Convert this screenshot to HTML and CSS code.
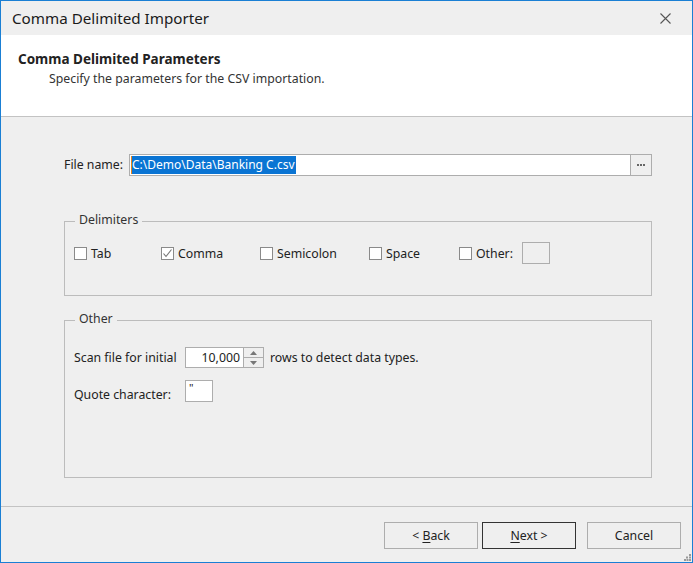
FILE: index.html
```html
<!DOCTYPE html>
<html>
<head>
<meta charset="utf-8">
<link rel="stylesheet" href="styles.css">
</head>
<body>
<div class="window">
  <div class="titlebar">
    <span class="title">Comma Delimited Importer</span>
    <svg class="close" width="11" height="11" viewBox="0 0 11 11"><path d="M0.5 0.5 L10.5 10.5 M10.5 0.5 L0.5 10.5" stroke="#555" stroke-width="1.1" fill="none"/></svg>
  </div>
  <div class="header">
    <div class="h-title">Comma Delimited Parameters</div>
    <div class="h-sub">Specify the parameters for the CSV importation.</div>
  </div>
  <div class="main">
    <div class="file-row">
      <span class="file-label">File name:</span>
      <div class="file-input"><span class="caret"></span><span class="sel">C:\Demo\Data\Banking C.csv</span></div>
      <div class="browse"><span class="dot"></span><span class="dot"></span><span class="dot"></span></div>
    </div>
    <div class="group delim">
      <span class="legend">Delimiters</span>
      <div class="check-row">
        <div class="check w-tab"><span class="box"></span><span>Tab</span></div>
        <div class="check w-comma"><span class="box"><svg width="11" height="11" viewBox="0 0 11 11"><path d="M1.5 5.5 L4 8.5 L9.5 1.5" stroke="#777" stroke-width="1.1" fill="none"/></svg></span><span>Comma</span></div>
        <div class="check w-semi"><span class="box"></span><span>Semicolon</span></div>
        <div class="check w-space"><span class="box"></span><span>Space</span></div>
        <div class="check w-other"><span class="box"></span><span>Other:</span></div>
        <div class="other-field"></div>
      </div>
    </div>
    <div class="group other">
      <span class="legend">Other</span>
      <div class="scan-row">
        <span class="lbl-scan">Scan file for initial</span>
        <div class="spin">
          <span class="spin-val">10,000</span>
          <div class="spin-btns">
            <div class="spin-btn"><svg width="7" height="4" viewBox="0 0 7 4"><path d="M0 4 L3.5 0 L7 4 Z" fill="#777"/></svg></div>
            <div class="spin-btn"><svg width="7" height="4" viewBox="0 0 7 4"><path d="M0 0 L3.5 4 L7 0 Z" fill="#777"/></svg></div>
          </div>
        </div>
        <span class="lbl-rows">rows to detect data types.</span>
      </div>
      <div class="quote-row">
        <span class="lbl-quote">Quote character:</span>
        <div class="quote-field">"</div>
      </div>
    </div>
  </div>
  <div class="footer">
    <button class="btn"><span>&lt; <u>B</u>ack</span></button>
    <button class="btn btn-default"><span><u>N</u>ext &gt;</span></button>
    <button class="btn btn-cancel"><span>Cancel</span></button>
    <svg class="grip" width="7" height="7" viewBox="0 0 7 7">
      <rect x="5" y="0" width="2" height="2" fill="#999"/>
      <rect x="2" y="2.5" width="2" height="2" fill="#999"/>
      <rect x="5" y="2.5" width="2" height="2" fill="#999"/>
      <rect x="0" y="5" width="2" height="2" fill="#999"/>
      <rect x="2.5" y="5" width="2" height="2" fill="#999"/>
      <rect x="5" y="5" width="2" height="2" fill="#999"/>
    </svg>
  </div>
</div>
</body>
</html>
```

FILE: styles.css
```css
* { box-sizing: border-box; }
html, body { margin: 0; padding: 0; }
body {
  font-family: "Segoe UI", "Noto Sans", "Open Sans", sans-serif;
  font-size: 12.3px;
  color: #222;
  background: #efefef;
}
.window {
  width: 693px;
  height: 563px;
  border: 1px solid #1a7fd4;
  background: #efefef;
  display: flex;
  flex-direction: column;
}
.titlebar {
  height: 34px;
  display: flex;
  align-items: center;
  justify-content: space-between;
  padding: 0 21px 0 11px;
  background: #efefef;
}
.title {
  font-size: 15.2px;
  color: #1b1b1b;
}
.close { display: block; margin-top: 1px; }
.header {
  height: 82px;
  background: #fff;
  border-bottom: 1px solid #c3c3c3;
  padding: 16px 0 0 17px;
}
.h-title {
  font-size: 13.5px;
  font-weight: bold;
  line-height: 17px;
  color: #222;
}
.h-sub {
  margin-top: 3px;
  padding-left: 31px;
  line-height: 16px;
  font-size: 12.3px;
  color: #333;
}
.main {
  height: 390px;
  border-bottom: 1px solid #c3c3c3;
  padding: 37px 40px 0 63px;
}
.file-row {
  display: flex;
  height: 22px;
  align-items: stretch;
}
.file-label {
  width: 65px;
  line-height: 22px;
}
.file-input {
  width: 502px;
  background: #fff;
  border: 1px solid #adadad;
  display: flex;
  align-items: center;
  padding-left: 1px;
}
.caret {
  width: 1px;
  height: 18px;
  background: #e8841a;
}
.sel {
  background: #0a74d3;
  color: #fff;
  height: 18px;
  line-height: 18px;
  font-size: 12px;
  padding-right: 1px;
}
.browse {
  width: 21px;
  border: 1px solid #adadad;
  border-left: none;
  background: #efefef;
  display: flex;
  align-items: center;
  justify-content: center;
  gap: 1px;
}
.dot {
  width: 2px;
  height: 2px;
  background: #666;
}
.group {
  position: relative;
  width: 588px;
  border: 1px solid #bcbcbc;
}
.legend {
  position: absolute;
  left: 10px;
  top: -10px;
  padding: 0 4px 0 4px;
  background: #efefef;
  line-height: 16px;
  color: #333;
}
.delim {
  margin-top: 45px;
  height: 75px;
  padding: 20px 0 0 9px;
}
.check-row {
  display: flex;
  align-items: center;
  height: 22px;
}
.check {
  display: flex;
  align-items: center;
  gap: 4px;
}
.box {
  width: 13px;
  height: 13px;
  border: 1px solid #8a8a8a;
  background: #fff;
  display: flex;
  align-items: center;
  justify-content: center;
  flex: none;
}
.box svg { display: block; }
.w-tab { width: 87px; }
.w-comma { width: 99px; }
.w-semi { width: 109px; }
.w-space { width: 90px; }
.w-other { width: 63px; }
.other-field {
  width: 28px;
  height: 22px;
  border: 1px solid #adadad;
  background: #efefef;
}
.other {
  margin-top: 24px;
  height: 158px;
  padding: 26px 0 0 9px;
}
.scan-row {
  display: flex;
  align-items: center;
  height: 21px;
}
.lbl-scan { width: 111px; }
.spin {
  width: 79px;
  height: 21px;
  border: 1px solid #adadad;
  background: #fff;
  display: flex;
}
.spin-val {
  flex: 1;
  text-align: right;
  padding-right: 3px;
  line-height: 19px;
}
.spin-btns {
  width: 20px;
  border-left: 1px solid #adadad;
  display: flex;
  flex-direction: column;
  background: #efefef;
}
.spin-btn {
  flex: 1;
  display: flex;
  align-items: center;
  justify-content: center;
}
.spin-btn + .spin-btn { border-top: 1px solid #adadad; }
.spin-btn svg { display: block; }
.lbl-rows { margin-left: 6px; }
.quote-row {
  display: flex;
  align-items: center;
  margin-top: 12px;
  height: 22px;
}
.lbl-quote { width: 111px; padding-top: 6px; }
.quote-field {
  width: 28px;
  height: 22px;
  border: 1px solid #adadad;
  background: #fff;
  font-size: 11px;
  line-height: 14px;
  padding-left: 3px;
}
.footer {
  position: relative;
  flex: 1;
  display: flex;
  justify-content: flex-end;
  align-items: flex-start;
  padding: 15px 11px 0 0;
}
.btn {
  width: 94px;
  height: 27px;
  border: 1px solid #adadad;
  background: #efefef;
  font-family: inherit;
  font-size: 12.3px;
  color: #222;
  padding: 0;
  margin: 0;
}
.btn u { text-decoration: underline; text-underline-offset: 2px; }
.btn-default {
  margin-left: 4px;
  border-color: #333;
}
.btn-cancel { margin-left: 11px; }
.grip {
  position: absolute;
  right: 1px;
  bottom: 1px;
}
```
